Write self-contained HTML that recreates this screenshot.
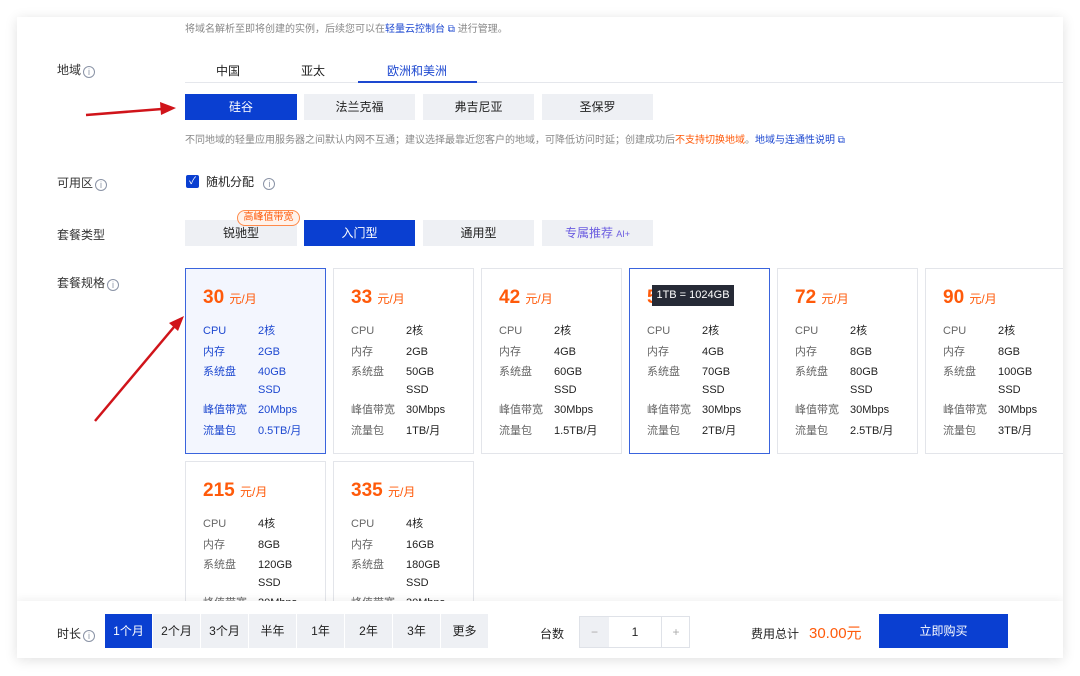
<!DOCTYPE html>
<html><head><meta charset="utf-8"><style>
*{margin:0;padding:0;box-sizing:border-box}
body{width:1080px;height:676px;background:#fff;position:relative;overflow:hidden;font-family:"Liberation Sans","Noto Sans CJK SC",sans-serif;color:#222;font-size:12px}
.a{position:absolute}
.wrap{position:absolute;left:17px;top:17px;width:1046px;height:641px;background:#fff;box-shadow:0 2px 12px rgba(0,0,0,.12);overflow:hidden}
.lbl{position:absolute;left:40px;font-size:12px;color:#333;line-height:16px}
.i{display:inline-block;width:12px;height:12px;border:1px solid #8a93a6;border-radius:50%;font-size:9px;line-height:10px;text-align:center;color:#8a93a6;vertical-align:-1px;margin-left:2px}
.btn{position:absolute;height:26px;background:#eef0f4;text-align:center;line-height:26px;font-size:12px;color:#222}
.blue{background:#0a3fd1 !important;color:#fff !important}
.card{position:absolute;width:141px;height:186px;border:1px solid #e3e5ea;background:#fff}
.card.sel{background:#f3f6fe;border-color:#3a64dd}
.card.hov{border-color:#3a64dd}
.pr{position:absolute;left:17px;top:18px;color:#ff5a0a;font-size:19px;font-weight:bold}
.pr span{font-size:12px;font-weight:normal}
.row{position:absolute;left:17px;font-size:11px;color:#666;line-height:14px;width:120px}
.row b{position:absolute;left:55px;top:0;font-weight:normal;color:#222;white-space:nowrap}
.sel .row,.sel .row b{color:#1d48d0}
.bar{position:absolute;left:0;top:584px;width:1046px;height:59px;background:#fff;box-shadow:0 -2px 8px rgba(0,0,0,.06)}
.d{position:absolute;top:13px;width:47px;height:34px;background:#eef0f4;line-height:34px;text-align:center;font-size:12px}
</style></head><body>
<div class="wrap">
<div class="a" style="left:168px;top:3px;font-size:10px;color:#888">将域名解析至即将创建的实例，后续您可以在<span style="color:#1d48d0">轻量云控制台 ⧉</span> 进行管理。</div>
<div class="lbl" style="top:45px">地域<span class="i">i</span></div>
<div class="a" style="left:168px;top:65px;width:878px;height:1px;background:#e5e7ec"></div>
<div class="a" style="left:341px;top:64px;width:119px;height:2px;background:#1d48d0"></div>
<div class="a" style="left:199px;top:45px;font-size:12px">中国</div>
<div class="a" style="left:284px;top:45px;font-size:12px">亚太</div>
<div class="a" style="left:370px;top:45px;font-size:12px;color:#1d48d0">欧洲和美洲</div>
<div class="btn blue" style="left:168px;top:77px;width:112px">硅谷</div>
<div class="btn" style="left:287px;top:77px;width:111px">法兰克福</div>
<div class="btn" style="left:406px;top:77px;width:111px">弗吉尼亚</div>
<div class="btn" style="left:525px;top:77px;width:111px">圣保罗</div>
<div class="a" style="left:168px;top:114px;font-size:10px;color:#888">不同地域的轻量应用服务器之间默认内网不互通；建议选择最靠近您客户的地域，可降低访问时延；创建成功后<span style="color:#ff5a0a">不支持切换地域</span>。<span style="color:#1d48d0">地域与连通性说明 ⧉</span></div>
<div class="lbl" style="top:158px">可用区<span class="i">i</span></div>
<div class="a" style="left:169px;top:158px;width:13px;height:13px;background:#0a3fd1;border-radius:2px;color:#fff;font-size:10px;line-height:13px;text-align:center">✓</div>
<div class="a" style="left:189px;top:156px;font-size:12px">随机分配 <span class="i" style="margin-left:6px">i</span></div>
<div class="lbl" style="top:210px">套餐类型</div>
<div class="btn" style="left:168px;top:203px;width:112px">锐驰型</div>
<div class="btn blue" style="left:287px;top:203px;width:111px">入门型</div>
<div class="btn" style="left:406px;top:203px;width:111px">通用型</div>
<div class="btn" style="left:525px;top:203px;width:111px;color:#6b5ce0">专属推荐 <span style="font-size:9px">AI+</span></div>
<div class="a" style="left:220px;top:193px;width:63px;height:16px;border:1px solid #ff8a4a;border-radius:8px;background:#fff2ea;color:#ff5a0a;font-size:10px;line-height:14px;text-align:center">高峰值带宽</div>
<div class="lbl" style="top:258px">套餐规格<span class="i">i</span></div>

<div class="card sel" style="left:168px;top:251px"><div class="pr">30 <span>元/月</span></div>
<div class="row" style="top:55px">CPU<b>2核</b></div><div class="row" style="top:76px">内存<b>2GB</b></div><div class="row" style="top:96px">系统盘<b>40GB</b></div><div class="row" style="top:114px"><b>SSD</b></div><div class="row" style="top:134px">峰值带宽<b>20Mbps</b></div><div class="row" style="top:155px">流量包<b>0.5TB/月</b></div></div>
<div class="card" style="left:316px;top:251px"><div class="pr">33 <span>元/月</span></div>
<div class="row" style="top:55px">CPU<b>2核</b></div><div class="row" style="top:76px">内存<b>2GB</b></div><div class="row" style="top:96px">系统盘<b>50GB</b></div><div class="row" style="top:114px"><b>SSD</b></div><div class="row" style="top:134px">峰值带宽<b>30Mbps</b></div><div class="row" style="top:155px">流量包<b>1TB/月</b></div></div>
<div class="card" style="left:464px;top:251px"><div class="pr">42 <span>元/月</span></div>
<div class="row" style="top:55px">CPU<b>2核</b></div><div class="row" style="top:76px">内存<b>4GB</b></div><div class="row" style="top:96px">系统盘<b>60GB</b></div><div class="row" style="top:114px"><b>SSD</b></div><div class="row" style="top:134px">峰值带宽<b>30Mbps</b></div><div class="row" style="top:155px">流量包<b>1.5TB/月</b></div></div>
<div class="card hov" style="left:612px;top:251px"><div class="pr">50 <span>元/月</span></div>
<div class="row" style="top:55px">CPU<b>2核</b></div><div class="row" style="top:76px">内存<b>4GB</b></div><div class="row" style="top:96px">系统盘<b>70GB</b></div><div class="row" style="top:114px"><b>SSD</b></div><div class="row" style="top:134px">峰值带宽<b>30Mbps</b></div><div class="row" style="top:155px">流量包<b>2TB/月</b></div>
<div class="a" style="left:22px;top:16px;width:82px;height:21px;background:#262a36;color:#fff;font-size:11px;line-height:21px;text-align:center">1TB = 1024GB</div></div>
<div class="card" style="left:760px;top:251px"><div class="pr">72 <span>元/月</span></div>
<div class="row" style="top:55px">CPU<b>2核</b></div><div class="row" style="top:76px">内存<b>8GB</b></div><div class="row" style="top:96px">系统盘<b>80GB</b></div><div class="row" style="top:114px"><b>SSD</b></div><div class="row" style="top:134px">峰值带宽<b>30Mbps</b></div><div class="row" style="top:155px">流量包<b>2.5TB/月</b></div></div>
<div class="card" style="left:908px;top:251px"><div class="pr">90 <span>元/月</span></div>
<div class="row" style="top:55px">CPU<b>2核</b></div><div class="row" style="top:76px">内存<b>8GB</b></div><div class="row" style="top:96px">系统盘<b>100GB</b></div><div class="row" style="top:114px"><b>SSD</b></div><div class="row" style="top:134px">峰值带宽<b>30Mbps</b></div><div class="row" style="top:155px">流量包<b>3TB/月</b></div></div>
<div class="card" style="left:168px;top:444px"><div class="pr">215 <span>元/月</span></div>
<div class="row" style="top:55px">CPU<b>4核</b></div><div class="row" style="top:76px">内存<b>8GB</b></div><div class="row" style="top:96px">系统盘<b>120GB</b></div><div class="row" style="top:114px"><b>SSD</b></div><div class="row" style="top:134px">峰值带宽<b>30Mbps</b></div></div>
<div class="card" style="left:316px;top:444px"><div class="pr">335 <span>元/月</span></div>
<div class="row" style="top:55px">CPU<b>4核</b></div><div class="row" style="top:76px">内存<b>16GB</b></div><div class="row" style="top:96px">系统盘<b>180GB</b></div><div class="row" style="top:114px"><b>SSD</b></div><div class="row" style="top:134px">峰值带宽<b>30Mbps</b></div></div>

<div class="bar">
<div class="a" style="left:40px;top:24px;font-size:12px">时长<span class="i">i</span></div>
<div class="d blue" style="left:88px">1个月</div><div class="d" style="left:136px">2个月</div><div class="d" style="left:184px">3个月</div><div class="d" style="left:232px">半年</div><div class="d" style="left:280px">1年</div><div class="d" style="left:328px">2年</div><div class="d" style="left:376px">3年</div><div class="d" style="left:424px">更多</div>
<div class="a" style="left:523px;top:24px;font-size:12px">台数</div>
<div class="a" style="left:562px;top:15px;width:111px;height:32px;border:1px solid #dfe2e8;background:#fff">
<div class="a" style="left:0;top:0;width:29px;height:30px;background:#eef0f4;color:#aaa;text-align:center;line-height:30px">−</div>
<div class="a" style="left:29px;top:0;width:52px;height:30px;text-align:center;line-height:30px">1</div>
<div class="a" style="left:81px;top:0;width:29px;height:30px;border-left:1px solid #dfe2e8;color:#aaa;text-align:center;line-height:30px">+</div></div>
<div class="a" style="left:734px;top:24px;font-size:12px">费用总计</div>
<div class="a" style="left:792px;top:21px;font-size:15px;color:#ff5a0a">30.00元</div>
<div class="a blue" style="left:862px;top:13px;width:129px;height:34px;line-height:34px;text-align:center;font-size:12px">立即购买</div>
</div>
</div>
<svg class="a" style="left:0;top:0" width="1080" height="676">
<line x1="86" y1="115" x2="162" y2="109" stroke="#d0141a" stroke-width="2.5"/>
<polygon points="176,108 160,102 161,115" fill="#d0141a"/>
<line x1="95" y1="421" x2="174" y2="327" stroke="#d0141a" stroke-width="2.5"/>
<polygon points="184,316 169,323 178,331" fill="#d0141a"/>
</svg>
</body></html>
